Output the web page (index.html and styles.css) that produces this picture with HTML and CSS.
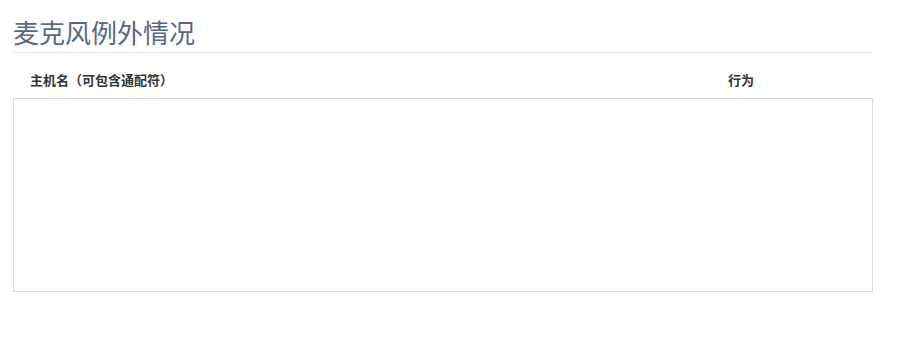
FILE: index.html
```html
<!DOCTYPE html>
<html lang="zh-CN">
<head>
<meta charset="utf-8">
<title>麦克风例外情况</title>
<link rel="stylesheet" href="styles.css">
</head>
<body>
<div class="page">
  <h1 class="title">麦克风例外情况</h1>
  <div class="columns">
    <div class="col-host">主机名（可包含通配符）</div>
    <div class="col-behavior">行为</div>
  </div>
  <div class="list"></div>
</div>
</body>
</html>
```
FILE: styles.css
```css
html, body {
  margin: 0;
  padding: 0;
  background: #ffffff;
}
.page {
  width: 860px;
  margin-left: 13px;
  padding-top: 16px;
  font-family: "Noto Sans CJK SC", "Noto Sans", sans-serif;
}
.title {
  margin: 0;
  font-size: 26px;
  font-weight: normal;
  line-height: 32px;
  color: #5a6784;
  padding-bottom: 4px;
  border-bottom: 1px solid #e6e6e6;
}
.columns {
  box-sizing: border-box;
  display: grid;
  grid-template-columns: 698px 1fr;
  padding: 8px 0 0 17px;
  height: 45px;
  align-items: center;
  font-size: 13px;
  font-weight: bold;
  color: #333333;
}
.list {
  height: 192px;
  border: 1px solid #d9d9d9;
}
```
